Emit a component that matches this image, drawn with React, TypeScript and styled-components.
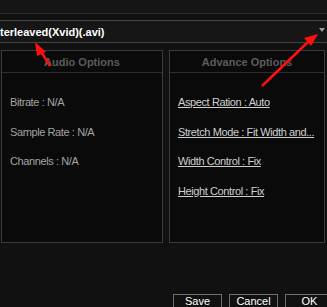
import React from "react";
import styled, { createGlobalStyle } from "styled-components";

const GlobalStyle = createGlobalStyle`
  html, body {
    margin: 0;
    padding: 0;
    background: #111111;
  }
`;

const FONT = `"Liberation Sans", Arial, sans-serif`;

const audioFields = ["Bitrate : N/A", "Sample Rate : N/A", "Channels : N/A"];
const advanceFields = [
  "Aspect Ration : Auto",
  "Stretch Mode : Fit Width and...",
  "Width Control : Fix",
  "Height Control : Fix",
];

export default function App() {
  return (
    <>
      <GlobalStyle />
      <Screen>
        <PrevCombo />
        <Combo>
          <ComboText>terleaved(Xvid)(.avi)</ComboText>
          <ComboArrow />
        </Combo>
        <Panels>
          <Panel>
            <PanelHeader>Audio Options</PanelHeader>
            <FieldList>
              {audioFields.map((f) => (
                <Field key={f}>{f}</Field>
              ))}
            </FieldList>
          </Panel>
          <Panel $edge>
            <PanelHeader>Advance Options</PanelHeader>
            <FieldList>
              {advanceFields.map((f) => (
                <Field key={f} $link>
                  {f}
                </Field>
              ))}
            </FieldList>
          </Panel>
        </Panels>
        <Buttons>
          <Button>Save</Button>
          <Button>Cancel</Button>
          <Button>OK</Button>
        </Buttons>
        <Arrows width={327} height={307} viewBox="0 0 327 307">
          <line x1="50" y1="66" x2="40" y2="50" stroke="#ff1010" strokeWidth="2.5" />
          <polygon points="35,42 46,52 37,56" fill="#ff1010" />
          <line x1="262" y1="86" x2="308" y2="42" stroke="#ff1010" strokeWidth="2.5" />
          <polygon points="318,34 304,38 311,46" fill="#ff1010" />
        </Arrows>
      </Screen>
    </>
  );
}

const Screen = styled.div`
  position: relative;
  width: 327px;
  height: 307px;
  overflow: hidden;
  background: #111111;
  font-family: ${FONT};
  display: flex;
  flex-direction: column;

  & > * {
    flex-shrink: 0;
  }
`;

const PrevCombo = styled.div`
  height: 13px;
  background: #151515;
  border-bottom: 1px solid #2c2c2c;
`;

const Combo = styled.div`
  margin-top: 6px;
  height: 21px;
  background: #161616;
  border-top: 1px solid #444444;
  border-bottom: 1px solid #444444;
  display: flex;
  align-items: center;
  overflow: hidden;
`;

const ComboText = styled.span`
  flex: 1;
  color: #ffffff;
  font-size: 11px;
  font-weight: bold;
  white-space: nowrap;
`;

const ComboArrow = styled.span`
  width: 0;
  height: 0;
  margin-right: 2px;
  margin-bottom: 3px;
  border-left: 3px solid transparent;
  border-right: 3px solid transparent;
  border-top: 4px solid #9a9a9a;
`;

const Panels = styled.div`
  margin-top: 7px;
  height: 193px;
  display: flex;
  gap: 6px;
  padding-left: 1px;
`;

const Panel = styled.div<{ $edge?: boolean }>`
  flex: ${(p) => (p.$edge ? "0 0 156px" : "0 0 162px")};
  box-sizing: border-box;
  background: #0a0a0a;
  border: 1px solid #3a3a3a;
  display: flex;
  flex-direction: column;
`;

const PanelHeader = styled.div`
  height: 21px;
  border-bottom: 1px solid #2e2e2e;
  display: flex;
  align-items: center;
  justify-content: center;
  color: #5c5c5c;
  font-size: 11px;
  font-weight: bold;
`;

const FieldList = styled.div`
  padding: 23px 0 0 8px;
  display: flex;
  flex-direction: column;
  gap: 16.5px;
`;

const Field = styled.div<{ $link?: boolean }>`
  height: 13px;
  line-height: 13px;
  font-size: 11px;
  letter-spacing: -0.4px;
  color: ${(p) => (p.$link ? "#cfcfcf" : "#a4a4a4")};
  text-decoration: ${(p) => (p.$link ? "underline" : "none")};
  white-space: nowrap;
`;

const Buttons = styled.div`
  margin-top: 51px;
  padding-left: 173px;
  display: flex;
  gap: 7px;
`;

const Button = styled.button`
  flex: 0 0 auto;
  width: 49px;
  height: 20px;
  padding: 1px 0 0;
  box-sizing: border-box;
  background: #111111;
  border: 1px solid #6e6e6e;
  color: #ffffff;
  font-family: ${FONT};
  font-size: 11px;
  line-height: 11px;
  display: flex;
  justify-content: center;
  align-items: flex-start;
`;

const Arrows = styled.svg`
  position: absolute;
  left: 0;
  top: 0;
  pointer-events: none;
`;
